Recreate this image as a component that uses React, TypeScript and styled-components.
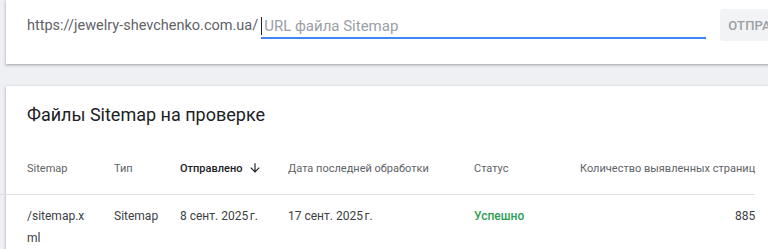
import React from "react";
import styled, { createGlobalStyle } from "styled-components";

const GlobalStyle = createGlobalStyle`
  html, body {
    margin: 0;
    padding: 0;
    background: #eef0f4;
    overflow: hidden;
  }
  body {
    font-family: Roboto, "Liberation Sans", sans-serif;
    color: #202124;
  }
`;

const Page = styled.div`
  display: flex;
  flex-direction: column;
  gap: 22px;
  padding-left: 6px;
  width: 800px;
`;

const Card = styled.div`
  background: #fff;
  box-shadow: 0 1px 2px rgba(60, 64, 67, 0.3), 0 1px 3px 1px rgba(60, 64, 67, 0.12);
`;

const SubmitBar = styled(Card)`
  height: 64px;
  display: flex;
  align-items: flex-start;
  padding: 0 0 0 21px;
  box-sizing: border-box;
`;

const Prefix = styled.span`
  flex-shrink: 0;
  white-space: nowrap;
  font-size: 14.5px;
  line-height: 20px;
  margin-top: 16px;
  color: #5f6368;
  margin-right: 3px;
`;

const InputWrap = styled.div`
  flex-shrink: 0;
  width: 445px;
  height: 30px;
  margin-top: 9px;
  padding-top: 6px;
  box-sizing: border-box;
  border-bottom: 2px solid #4285f4;
  display: flex;
  align-items: center;
`;

const Caret = styled.span`
  width: 1px;
  height: 18px;
  background: #202124;
  margin-right: 2px;
`;

const Placeholder = styled.span`
  font-size: 15px;
  color: #9aa0a6;
  white-space: nowrap;
`;

const SendButton = styled.button`
  flex-shrink: 0;
  margin-left: 14px;
  margin-top: 9px;
  height: 32px;
  padding: 0 14px 0 8px;
  border: none;
  border-radius: 4px;
  background: #f1f3f4;
  color: #9aa0a6;
  font-family: Roboto, "Liberation Sans", sans-serif;
  font-size: 13px;
  font-weight: 500;
  letter-spacing: 0.2px;
  white-space: nowrap;
`;

const TableCard = styled(Card)`
  padding-top: 15px;
  height: 200px;
`;

const Title = styled.h2`
  margin: 0 0 0 21px;
  font-size: 18px;
  font-weight: 400;
  line-height: 28px;
  color: #202124;
`;

const Grid = styled.div`
  margin-top: 13px;
  display: grid;
  grid-template-columns: 87px 66px 108px 186px 106px 1fr;
  padding-left: 21px;
  width: 747px;
  box-sizing: border-box;
`;

const HeadCell = styled.div<{ $active?: boolean; $right?: boolean }>`
  height: 52px;
  display: flex;
  align-items: center;
  justify-content: ${(p) => (p.$right ? "flex-end" : "flex-start")};
  font-size: 11px;
  font-weight: ${(p) => (p.$active ? 500 : 400)};
  color: ${(p) => (p.$active ? "#202124" : "#5f6368")};
  border-bottom: 1px solid #e0e0e0;
  margin-left: -21px;
  padding-left: 21px;
  white-space: nowrap;
  &:first-child {
    margin-left: -27px;
    padding-left: 27px;
  }
`;

const Cell = styled.div<{ $right?: boolean; $status?: boolean; $wrap?: boolean }>`
  padding-top: 10px;
  padding-right: ${(p) => (p.$right ? 0 : 8)}px;
  font-size: 12px;
  line-height: 22px;
  color: ${(p) => (p.$status ? "#2e9e55" : "#3c4043")};
  font-weight: ${(p) => (p.$status ? 500 : 400)};
  text-align: ${(p) => (p.$right ? "right" : "left")};
  word-break: ${(p) => (p.$wrap ? "break-all" : "normal")};
  white-space: ${(p) => (p.$wrap ? "normal" : "nowrap")};
  ${(p) => (p.$wrap ? "width: 62px;" : "")}
`;

const Arrow = () => (
  <svg width="14" height="14" viewBox="0 0 24 24" style={{ marginLeft: 6 }}>
    <path d="M20 12l-1.41-1.41L13 16.17V4h-2v12.17l-5.58-5.59L4 12l8 8 8-8z" fill="#202124" />
  </svg>
);

export default function App() {
  return (
    <>
      <GlobalStyle />
      <Page>
        <SubmitBar>
          <Prefix>https://jewelry-shevchenko.com.ua/</Prefix>
          <InputWrap>
            <Caret />
            <Placeholder>URL файла Sitemap</Placeholder>
          </InputWrap>
          <SendButton>ОТПРАВИТЬ</SendButton>
        </SubmitBar>
        <TableCard>
          <Title>Файлы Sitemap на проверке</Title>
          <Grid>
            <HeadCell>Sitemap</HeadCell>
            <HeadCell>Тип</HeadCell>
            <HeadCell $active>
              Отправлено
              <Arrow />
            </HeadCell>
            <HeadCell>Дата последней обработки</HeadCell>
            <HeadCell>Статус</HeadCell>
            <HeadCell $right>Количество выявленных страниц</HeadCell>
            <Cell $wrap>/sitemap.xml</Cell>
            <Cell>Sitemap</Cell>
            <Cell>8 сент. 2025{"\u202F"}г.</Cell>
            <Cell>17 сент. 2025{"\u202F"}г.</Cell>
            <Cell $status>Успешно</Cell>
            <Cell $right>885</Cell>
          </Grid>
        </TableCard>
      </Page>
    </>
  );
}
